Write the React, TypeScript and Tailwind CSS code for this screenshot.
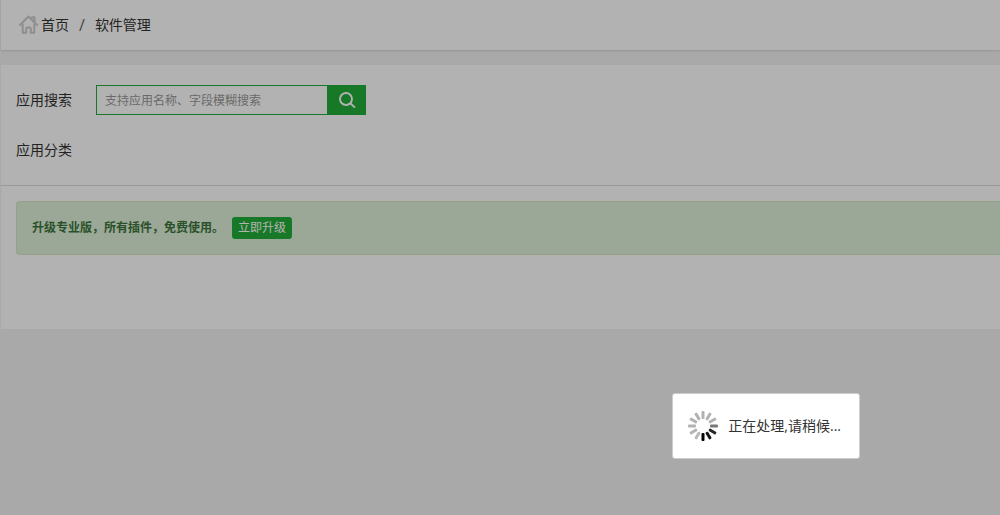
const spokes = [
  '#b2b2b2', '#b2b2b2', '#b2b2b2', '#777777', '#262626', '#161616',
  '#000000', '#b8b8b8', '#b2b2b2', '#b2b2b2', '#b2b2b2', '#b2b2b2',
]

function HomeIcon() {
  return (
    <svg width="20" height="20" viewBox="0 0 20 20" fill="none" stroke="#cccccc" strokeWidth="2" strokeLinejoin="round" strokeLinecap="round">
      <path d="M1 10 9.5 1.5 18 10" />
      <path d="M3.7 9.5v8.2h3.5v-4c0-.8.5-1.3 1.3-1.3h2c.8 0 1.3.5 1.3 1.3v4h3.5V9.5" />
      <path d="M13 2.2h2.5v4" />
    </svg>
  )
}

function SearchIcon() {
  return (
    <svg width="18" height="18" viewBox="0 0 18 18" fill="none" stroke="#ffffff" strokeWidth="1.9">
      <circle cx="8" cy="8" r="6" />
      <path d="m12 12 5 4.6" />
    </svg>
  )
}

function Spinner() {
  return (
    <svg width="30" height="30" viewBox="0 0 30 30">
      {spokes.map((color, i) => (
        <rect key={i} x="13.5" y="0" width="3" height="8" rx="1" fill={color} transform={`rotate(${i * 30} 15 15)`} />
      ))}
    </svg>
  )
}

export default function App() {
  return (
    <div className="min-h-screen bg-[#f2f2f2] pl-px text-sm text-[#333] font-['Open_Sans','Noto_Sans_CJK_SC',sans-serif]">
      <nav className="flex h-[50px] items-center bg-white pl-[18px] shadow-[0_1px_2px_rgba(0,0,0,0.12)]">
        <a href="#" className="flex items-center gap-0.5">
          <HomeIcon />
          首页
        </a>
        <span className="px-2.5 text-base text-[#666]">/</span>
        <span>软件管理</span>
      </nav>

      <main className="mt-[15px] bg-white pb-[74px]">
        <div className="border-b border-[#dcdcdc] pt-5 pl-[15px]">
          <form className="flex h-[30px] items-center" onSubmit={(e) => e.preventDefault()}>
            <label htmlFor="keyword" className="w-20">应用搜索</label>
            <input
              id="keyword"
              type="text"
              placeholder="支持应用名称、字段模糊搜索"
              className="h-full w-[232px] border border-[#22ac38] px-2 text-xs outline-none placeholder:text-[#999]"
            />
            <button type="submit" aria-label="搜索" className="flex h-full w-[38px] items-center justify-center bg-[#22ac38]">
              <SearchIcon />
            </button>
          </form>
          <div className="mt-5 mb-5 flex h-[30px] items-center">应用分类</div>
        </div>

        <div className="mt-[15px] ml-[15px] flex h-[54px] items-center gap-2 rounded-l border border-r-0 border-[#d6e9c6] bg-[#dff0d8] pl-[15px] text-xs text-[#3c763d]">
          <strong>升级专业版，所有插件，免费使用。</strong>
          <button type="button" className="h-[22px] rounded-[3px] bg-[#22ac38] px-1.5 text-white">立即升级</button>
        </div>
      </main>

      <div className="fixed inset-0 bg-black/30">
        <div role="status" className="absolute right-[140px] bottom-14 flex h-[66px] items-center gap-2.5 rounded-[3px] border border-[#ccc] bg-white pr-[18px] pl-[15px]">
          <Spinner />
          <span>正在处理,请稍候...</span>
        </div>
      </div>
    </div>
  )
}
